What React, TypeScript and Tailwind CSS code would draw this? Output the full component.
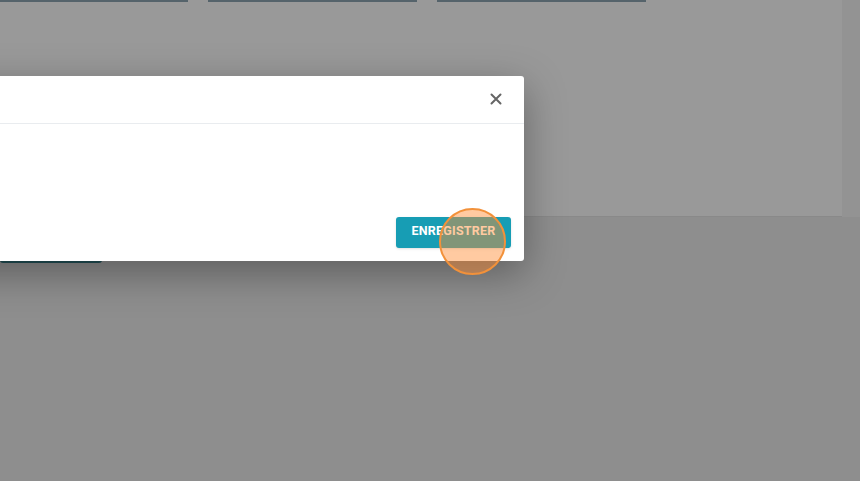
import React from 'react';

const CloseIcon = () => (
  <svg width="12" height="12" viewBox="0 0 12 12" className="block">
    <path d="M1.5 1.5 L10.5 10.5 M10.5 1.5 L1.5 10.5" stroke="#656565" strokeWidth="2" strokeLinecap="round" />
  </svg>
);

const App: React.FC = () => {
  return (
    <div className="relative w-[860px] h-[481px] overflow-hidden bg-[#ededed]" style={{ fontFamily: 'Roboto, "Liberation Sans", sans-serif' }}>
      {/* page behind the dialog */}
      <div className="flex">
        <div className="w-[842px] h-[217px] bg-white border-b border-[#e4e4e4] flex gap-5 items-start">
          <div className="w-[188px] h-[2px] bg-[#8ea6b3]" />
          <div className="w-[209px] h-[2px] bg-[#8ea6b3]" />
          <div className="w-[209px] h-[2px] bg-[#8ea6b3]" />
        </div>
        <div className="flex-1 h-[217px] bg-[#f6f6f6]" />
      </div>
      <div className="mt-[10px] w-[102px] h-[36px] rounded-b-[3px] bg-[#3a8590]" />

      {/* overlay */}
      <div className="absolute inset-0 bg-black/40" />

      {/* dialog */}
      <div className="absolute left-[-96px] top-[76px] w-[620px] h-[185px] bg-white rounded-[3px] shadow-[0_12px_40px_rgba(0,0,0,0.35)] flex flex-col">
        <div className="h-[48px] border-b border-[#e9ecef] flex items-center justify-end pr-[16px] pb-[2px]">
          <button className="w-[24px] h-[24px] flex items-center justify-center">
            <CloseIcon />
          </button>
        </div>
        <div className="flex-1 flex items-end justify-end pr-[13px] pb-[13px]">
          <button className="h-[31px] w-[115px] rounded-[3px] bg-[#179db4] text-white text-[12.5px] leading-none font-bold tracking-[0.2px] shadow-sm flex items-center justify-center pb-[3px]">
            ENREGISTRER
          </button>
        </div>
      </div>

      {/* click marker */}
      <div className="absolute left-[439px] top-[208px] w-[67px] h-[67px] rounded-full border-2 border-[#f2913a] bg-[rgba(255,140,50,0.46)]" />
    </div>
  );
};

export default App;
